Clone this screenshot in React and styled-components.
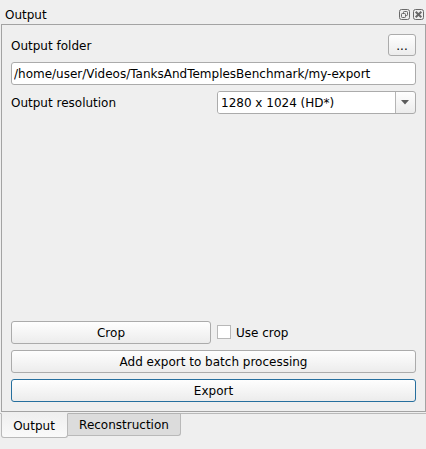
import React from 'react';
import styled, { createGlobalStyle } from 'styled-components';

const GlobalStyle = createGlobalStyle`
  * { box-sizing: border-box; }
  body {
    margin: 0;
    background: #efefef;
    overflow: hidden;
  }
`;

const Dock = styled.div`
  display: flex;
  flex-direction: column;
  width: 426px;
  height: 449px;
  background: #efefef;
  color: #000;
  font: 12px/14px 'DejaVu Sans', sans-serif;
  white-space: nowrap;
`;

const TitleBar = styled.header`
  display: flex;
  align-items: flex-start;
  height: 24px;
  padding: 8px 2px 0 5px;
  gap: 3px;
`;

const Title = styled.span`
  flex: 1;
`;

const TitleButton = styled.button`
  display: flex;
  width: 11px;
  height: 11px;
  margin: 1px 0 0;
  padding: 0;
  border: 0;
  background: none;
`;

const Panel = styled.main`
  display: flex;
  flex-direction: column;
  width: 425px;
  height: 388px;
  margin-left: 1px;
  padding: 9px;
  border: 1px solid #a3a3a3;
`;

const Row = styled.div`
  display: flex;
  align-items: center;
  height: ${(p) => p.$height || 23}px;
  margin-bottom: 6px;
  flex: none;
`;

const Label = styled.label`
  width: 206px;
  padding-top: ${(p) => p.$drop || 0}px;
`;

const PushButton = styled.button`
  display: flex;
  align-items: center;
  justify-content: center;
  flex: none;
  width: ${(p) => p.$width || 405}px;
  height: ${(p) => p.$height || 23}px;
  margin: 0;
  padding: 1px 0 0;
  border: 1px solid ${(p) => (p.$primary ? '#266f9e' : '#ababab')};
  border-radius: 3px;
  background: linear-gradient(#fefefe, #ececec);
  color: inherit;
  font: inherit;
`;

const BrowseButton = styled(PushButton)`
  margin-left: auto;
`;

const PathField = styled.input`
  width: 405px;
  height: 23px;
  padding: 0 2px;
  border: 1px solid #ababab;
  border-radius: 3px;
  background: #fff;
  color: inherit;
  font: inherit;
  outline: 0;
`;

const ComboBox = styled.div`
  display: flex;
  width: 199px;
  height: 23px;
  border: 1px solid #ababab;
  border-radius: 3px;
  background: linear-gradient(#fefefe, #ececec);
  overflow: hidden;
`;

const ComboValue = styled.span`
  flex: 1;
  padding: 4px 3px 0;
  background: #fff;
`;

const ComboArrow = styled.span`
  display: flex;
  align-items: center;
  justify-content: center;
  width: 20px;
  padding-right: 1px;
  border-left: 1px solid #b5b5b5;
`;

const Spacer = styled.div`
  flex: 1;
`;

const CheckOption = styled.label`
  display: flex;
  align-items: center;
  gap: 5px;
  margin-left: 6px;
`;

const CheckBox = styled.input`
  appearance: none;
  width: 14px;
  height: 14px;
  margin: -1px 0 0;
  border: 1px solid #b8b8b8;
  background: #fff;
`;

const TabBar = styled.nav`
  display: flex;
  align-items: flex-start;
  margin-top: 1px;
  padding-left: 1px;
  border-top: 1px solid #b9b9b9;
`;

const Tab = styled.button`
  width: ${(p) => p.$width}px;
  height: ${(p) => (p.$active ? 25 : 23)}px;
  margin: -1px 0 0;
  padding: ${(p) => (p.$active ? '1px 1px 0 0' : '0')};
  border: 1px solid #b9b9b9;
  border-top-color: ${(p) => (p.$active ? '#efefef' : '#b3b3b3')};
  border-left-width: ${(p) => (p.$active ? 1 : 0)}px;
  border-radius: ${(p) => (p.$active ? '0 0 3px 3px' : '0 0 3px 0')};
  background: ${(p) => (p.$active ? 'linear-gradient(#efefef, #fafafa)' : '#dcdcdc')};
  color: inherit;
  font: inherit;
`;

const FloatIcon = () => (
  <svg width="11" height="11" viewBox="0 0 11 11" fill="none" stroke="#696969">
    <rect x="0.5" y="0.5" width="10" height="10" rx="2" />
    <rect x="4.5" y="2.5" width="4" height="4" rx="0.8" />
    <rect x="2.5" y="4.5" width="4" height="4" rx="0.8" fill="#efefef" />
  </svg>
);

const CloseIcon = () => (
  <svg width="11" height="11" viewBox="0 0 11 11" fill="none" stroke="#696969">
    <rect x="0.5" y="0.5" width="10" height="10" rx="2" />
    <path d="M2.7 2.7L8.3 8.3M8.3 2.7L2.7 8.3" strokeWidth="2" />
  </svg>
);

export default function App() {
  return (
    <>
      <GlobalStyle />
      <Dock>
        <TitleBar>
          <Title>Output</Title>
          <TitleButton aria-label="Float"><FloatIcon /></TitleButton>
          <TitleButton aria-label="Close"><CloseIcon /></TitleButton>
        </TitleBar>
        <Panel>
          <Row $height={22}>
            <Label $drop={2}>Output folder</Label>
            <BrowseButton $width={28} $height={22}>...</BrowseButton>
          </Row>
          <Row>
            <PathField aria-label="Output folder path" defaultValue="/home/user/Videos/TanksAndTemplesBenchmark/my-export" />
          </Row>
          <Row>
            <Label>Output resolution</Label>
            <ComboBox>
              <ComboValue>1280 x 1024 (HD*)</ComboValue>
              <ComboArrow>
                <svg width="8" height="5" viewBox="0 0 8 5"><path d="M0 0H8L4 4.5Z" fill="#5c5c5c" /></svg>
              </ComboArrow>
            </ComboBox>
          </Row>
          <Spacer />
          <Row>
            <PushButton $width={200}>Crop</PushButton>
            <CheckOption><CheckBox type="checkbox" />Use crop</CheckOption>
          </Row>
          <Row><PushButton>Add export to batch processing</PushButton></Row>
          <PushButton $primary>Export</PushButton>
        </Panel>
        <TabBar>
          <Tab $active $width={67}>Output</Tab>
          <Tab $width={113}>Reconstruction</Tab>
        </TabBar>
      </Dock>
    </>
  );
}
